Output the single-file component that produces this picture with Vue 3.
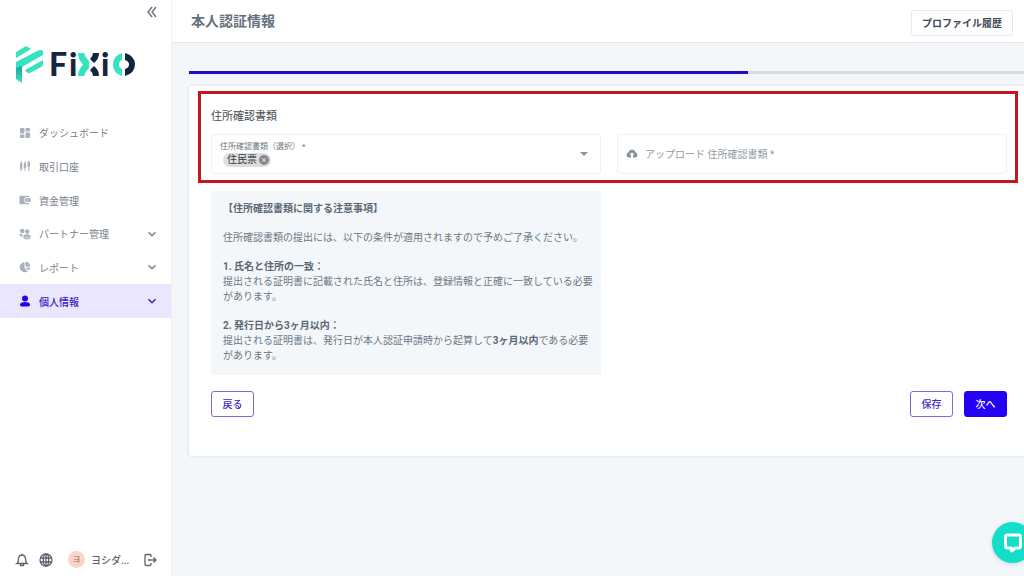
<script setup>
import { ref } from 'vue'

const items = [
  { label: 'ダッシュボード', icon: 'dashboard' },
  { label: '取引口座', icon: 'accounts' },
  { label: '資金管理', icon: 'wallet' },
  { label: 'パートナー管理', icon: 'partners', expandable: true },
  { label: 'レポート', icon: 'report', expandable: true },
  { label: '個人情報', icon: 'person', expandable: true, active: true },
]
const progress = 67
const documentType = ref('住民票')
</script>

<template>
  <div class="app">
    <aside class="sidebar">
      <button class="collapse" aria-label="メニューを閉じる">
        <svg viewBox="0 0 12 12" width="12" height="12"><path d="M6 1 2 6l4 5M10 1 6 6l4 5" /></svg>
      </button>

      <a class="logo" href="#" aria-label="FiXiO">
        <svg viewBox="0 0 120 40" width="120" height="40">
          <defs>
            <linearGradient id="stem" x1="0" y1="0" x2="0" y2="1">
              <stop offset="0" stop-color="#1fa595" /><stop offset="1" stop-color="#35e3c4" />
            </linearGradient>
          </defs>
          <g fill="#35e3c4">
            <path d="M1 8 11 2l5 3L1 14z" />
            <path d="M1 18 23 6.500q5-1.500 5 1v3.500L7 23l-6 3z" />
            <path d="M10 26 28 16v4q0 2-2 3l-11 6q-3 1-5-3z" />
          </g>
          <path d="M1 24 7 22v17l-6-4z" fill="url(#stem)" />
          <text x="34" y="32">F</text>
          <text x="54" y="32">i</text>
          <text x="86" y="32">i</text>
          <g fill="#35e3c4">
            <path d="M63 9h6q1 4 5 8v7q-4 4-5 8h-6q0-6 5-11.500-5-5-5-11.500z" />
            <path d="M107 9Q98 12 98 20.500T107 32v-7q-3-1-3-4.500t3-4.500z" />
          </g>
          <g fill="#15253f">
            <path d="M84 9h-6q0 3-3 6l4 4q5-4 5-10zM84 32h-6q0-3-3-6l4-4q5 4 5 10z" />
            <path d="M110 9q10 3 10 11.500T110 32v-7q4-1 4-4.500T110 16z" />
          </g>
        </svg>
      </a>

      <nav class="nav">
        <a v-for="item in items" :key="item.label" href="#" class="nav-item" :class="{ active: item.active }">
          <svg class="nav-icon" viewBox="0 0 12 12" width="12" height="12">
            <template v-if="item.icon === 'dashboard'">
              <rect x="1" y="1" width="4.500" height="5.500" rx="1" /><rect x="1" y="7.500" width="4.500" height="3.500" rx="1" />
              <rect x="6.500" y="1" width="4.500" height="3.500" rx="1" /><rect x="6.500" y="5.500" width="4.500" height="5.500" rx="1" />
            </template>
            <path v-else-if="item.icon === 'accounts'" d="M1 3h.7V1h1v2h.6v6h-.6v2h-1V9H1zM4.800 3h.7V1h1v2h.6v5h-.6v3h-1V8h-.7zM8.500 2h.7V1h1v1h.8v5h-.8v4h-1V7h-.7z" />
            <template v-else-if="item.icon === 'wallet'">
              <path d="M.5 3q0-1.200 1.200-1.200H9q1.200 0 1.200 1.200H7Q5.500 3 5.500 4.500v3Q5.500 9 7 9h3.200q0 1.200-1.200 1.200H1.700Q.5 10.200.5 9z" />
              <path d="M7 4h4.500v4H7q-.7 0-.7-.7V4.700Q6.300 4 7 4zm1.200 1.400v1.200h1.200V5.400z" />
            </template>
            <template v-else-if="item.icon === 'partners'">
              <circle cx="3.200" cy="3" r="2.300" /><circle cx="8.200" cy="3.500" r="2.200" />
              <path d="M.5 6.500q2-1.200 3.500-.3-1 .8-.8 2.800Q.5 8.800.5 6.500zM4.300 9q0-2.700 3.700-2.700T11.700 9q0 2.300-3.700 2.300T4.300 9z" />
              <path d="M5.500 9q2.500 1.500 5 0" stroke="#fff" stroke-width=".6" fill="none" />
            </template>
            <template v-else-if="item.icon === 'report'">
              <path d="M5.500 1.200V6.500l3.200 3.700A5 5 0 1 1 5.500 1.200z" /><path d="M6.500.7A4.700 4.700 0 0 1 11.200 5.500H6.500zM7 6.400h4.200A5 5 0 0 1 9.500 9.500z" />
            </template>
            <template v-else>
              <circle cx="6" cy="3.500" r="3" /><path d="M1 9.500Q1 7 6 7t5 2.500Q11 11.500 9.500 11.500h-7Q1 11.500 1 9.500z" />
            </template>
          </svg>
          <span>{{ item.label }}</span>
          <svg v-if="item.expandable" class="chevron" viewBox="0 0 10 10" width="10" height="10"><path d="m1.500 3.200 3.500 3.500 3.500-3.500" /></svg>
        </a>
      </nav>

      <div class="user-bar">
        <button aria-label="通知">
          <svg class="line" viewBox="0 0 14 14" width="14" height="14"><path d="M2 10.500q1.500-1 1.500-5Q4 2 7 2t3.500 3.500q0 4 1.500 5zM5.500 11v1.500h3V11M7 .7V2" /></svg>
        </button>
        <button aria-label="言語">
          <svg class="line" viewBox="0 0 14 14" width="14" height="14"><circle cx="7" cy="7" r="6" /><ellipse cx="7" cy="7" rx="2.700" ry="6" /><path d="M1.500 5h11M1.500 9h11M7 1v12" /></svg>
        </button>
        <span class="avatar">ヨ</span>
        <span class="user-name">ヨシダ...</span>
        <button aria-label="ログアウト">
          <svg class="line" viewBox="0 0 14 14" width="14" height="14"><path d="M8 4V2.800Q8 1.500 6.700 1.500H3.300Q2 1.500 2 2.800v8.400q0 1.300 1.300 1.300h3.400q1.300 0 1.300-1.300V10M5 7h8M10.500 4.500 13 7l-2.500 2.500" /></svg>
        </button>
      </div>
    </aside>

    <div class="content">
      <header class="topbar">
        <h1>本人認証情報</h1>
        <button class="history">プロファイル履歴</button>
      </header>

      <main class="main">
        <div class="track" role="progressbar" :aria-valuenow="progress"><div class="bar" :style="{ width: progress + '%' }"></div></div>

        <form class="card" @submit.prevent>
          <section class="highlight">
            <h2>住所確認書類</h2>
            <div class="columns">
              <div class="field select-field">
                <label for="document-type">住所確認書類（選択） *</label>
                <div class="chip">
                  <select id="document-type" v-model="documentType"><option>住民票</option></select>
                  <button type="button" aria-label="削除">
                    <svg viewBox="0 0 10 10" width="10" height="10"><circle cx="5" cy="5" r="5" fill="#85888d" /><path d="m3 3 4 4m0-4L3 7" stroke="#dedede" /></svg>
                  </button>
                </div>
                <svg class="caret" viewBox="0 0 8 4" width="8" height="4"><path d="M0 0h8L4 4z" /></svg>
              </div>
              <label class="field upload">
                <input type="file" />
                <svg viewBox="0 0 12 10" width="12" height="10"><path d="M3 9.500a2.700 2.700 0 0 1-.4-5.300 3.500 3.500 0 0 1 6.800 0A2.700 2.700 0 0 1 9 9.500H7V7h1.500L6 4.200 3.500 7H5v2.500z" /></svg>
                <span>アップロード 住所確認書類 *</span>
              </label>
            </div>
          </section>

          <div class="details">
            <div class="columns">
              <div class="notice">
                <p><strong>【住所確認書類に関する注意事項】</strong></p>
                <p>住所確認書類の提出には、以下の条件が適用されますので予めご了承ください。</p>
                <p><strong>1. 氏名と住所の一致：</strong><br />提出される証明書に記載された氏名と住所は、登録情報と正確に一致している必要があります。</p>
                <p><strong>2. 発行日から3ヶ月以内：</strong><br />提出される証明書は、発行日が本人認証申請時から起算して<strong>3ヶ月以内</strong>である必要があります。</p>
              </div>
            </div>
            <div class="actions">
              <button type="button" class="btn">戻る</button>
              <button type="button" class="btn save">保存</button>
              <button type="submit" class="btn primary">次へ</button>
            </div>
          </div>
        </form>
      </main>
    </div>

    <button class="chat" aria-label="チャット">
      <svg viewBox="0 0 20 20" width="20" height="20"><path d="M4.500 2h11q2 0 2 2v9q0 2-2 2h-3l-4 3v-3h-4q-2 0-2-2V4q0-2 2-2z" /></svg>
    </button>
  </div>
</template>

<style>
body {
  background: #f4f7fa;
}
</style>

<style scoped>
.app {
  display: flex;
  min-height: 100vh;
  font-family: Roboto, "Noto Sans CJK JP", sans-serif;
  font-size: 10px;
  color: #6d7783;
}
.app * {
  box-sizing: border-box;
}
button {
  font: inherit;
  color: inherit;
  background: none;
  border: 0;
  padding: 0;
  cursor: pointer;
}
a {
  color: inherit;
  text-decoration: none;
}
svg {
  display: block;
  flex: none;
}
h1, h2, p {
  margin: 0;
}
.sidebar {
  flex: none;
  width: 172px;
  display: flex;
  flex-direction: column;
  background: #fff;
  border-right: 1px solid #edf1f5;
}
.collapse {
  align-self: flex-end;
  margin: 6px 13px 0 0;
}
.collapse path {
  fill: none;
  stroke: #6d7783;
  stroke-width: 1.5;
}
.logo {
  margin: 26px 0 0 15px;
}
.logo text {
  font-family: Lato, sans-serif;
  font-size: 32px;
  font-weight: 900;
  fill: #15253f;
}
.nav {
  display: grid;
  grid-auto-rows: 1fr;
  height: 202px;
  margin-top: 32px;
}
.nav-item {
  display: flex;
  align-items: center;
  gap: 8px;
  padding: 0 14px 0 19px;
  color: #76808b;
}
.nav-icon {
  fill: #a9b1bb;
}
.chevron {
  margin-left: auto;
}
.chevron path {
  fill: none;
  stroke: currentColor;
  stroke-width: 1.4;
}
.nav-item.active {
  background: #e9e6fd;
  color: #3a20c0;
  font-weight: 500;
}
.active .nav-icon {
  fill: #2600e8;
}
.user-bar {
  display: flex;
  align-items: center;
  margin-top: auto;
  padding: 0 14px 8px 15px;
}
.line {
  fill: none;
  stroke: #5b6570;
  stroke-width: 1.3;
}
.avatar {
  width: 17px;
  margin: 0 6px 0 15px;
  border-radius: 50%;
  background: #f8d5c7;
  color: #97604c;
  font-size: 8px;
  line-height: 17px;
  text-align: center;
}
.user-bar button + button {
  margin-left: 10px;
}
.user-name {
  flex: 1;
  font-weight: 500;
  color: #5b6570;
}
.content {
  flex: 1;
  min-width: 0;
}
.topbar {
  display: flex;
  align-items: center;
  justify-content: space-between;
  height: 43px;
  padding: 3px 11px 0 19px;
  background: #fff;
  border-bottom: 1px solid #e3e8ed;
}
h1 {
  padding-bottom: 4px;
  font-size: 14px;
  line-height: 20px;
  font-weight: 700;
  color: #65717d;
}
.history {
  height: 26px;
  padding: 0 10px;
  border: 1px solid #e7eaee;
  border-radius: 3px;
  font-weight: 700;
  color: #414a55;
}
.main {
  padding: 28px 0 16px 17px;
}
.track {
  height: 3px;
  background: #d8dde2;
}
.bar {
  height: 3px;
  background: #2a09c6;
}
.card {
  margin-top: 12px;
  padding: 5px 6px 39px 9px;
  background: #fff;
  border-radius: 3px 0 0 3px;
  box-shadow: 0 0 3px #ccd5de;
}
.highlight {
  border: 3px solid #c4161c;
  padding: 14px 8px 6px 10px;
}
h2 {
  margin-bottom: 8px;
  font-size: 11px;
  line-height: 18px;
  font-weight: 400;
  color: #454b52;
}
.columns {
  display: grid;
  grid-template-columns: 1fr 1fr;
  gap: 16px;
}
.field {
  position: relative;
  height: 40px;
  border: 1px solid #eef1f4;
  border-radius: 3px;
}
.select-field {
  padding: 6px 8px;
}
.select-field label {
  display: block;
  font-size: 8px;
  line-height: 12px;
}
.chip {
  display: inline-flex;
  align-items: center;
  gap: 2px;
  height: 14px;
  margin-left: 3px;
  padding: 0 2px 0 4px;
  border-radius: 7px;
  background: #dedede;
  vertical-align: top;
}
.chip select {
  appearance: none;
  height: 14px;
  padding: 0;
  border: 0;
  background: none;
  font: inherit;
  line-height: 14px;
  color: #33383e;
}
.caret {
  position: absolute;
  right: 12px;
  top: 17px;
  fill: #8c949d;
}
.upload {
  display: flex;
  align-items: center;
  gap: 7px;
  padding: 0 8px 2px;
  color: #929aa4;
}
.upload svg {
  fill: #86909b;
}
.upload input {
  position: absolute;
  inset: 0;
  width: 100%;
  opacity: 0;
}
.details {
  padding: 8px 11px 0 13px;
}
.notice {
  display: grid;
  gap: 14px;
  padding: 10px 4px 12px 12px;
  border-radius: 2px;
  background: #f3f7fa;
  line-height: 15px;
}
.notice strong {
  font-weight: 700;
  color: #5b6773;
}
.actions {
  display: flex;
  gap: 11px;
  margin-top: 16px;
}
.btn {
  width: 43px;
  height: 26px;
  padding-bottom: 2px;
  border: 1px solid #7c6cd8;
  border-radius: 3px;
  color: #4229c4;
  font-weight: 500;
}
.save {
  margin-left: auto;
}
.primary {
  border-color: #2400f5;
  background: #2400f5;
  color: #fff;
}
.chat {
  position: fixed;
  right: -9px;
  bottom: 13px;
  display: grid;
  place-items: center;
  width: 41px;
  height: 41px;
  border-radius: 50%;
  background: #12dec9;
  box-shadow: 0 1px 4px #c5d5dc;
}
.chat path {
  fill: none;
  stroke: #fff;
  stroke-width: 3;
  stroke-linejoin: round;
}
</style>
